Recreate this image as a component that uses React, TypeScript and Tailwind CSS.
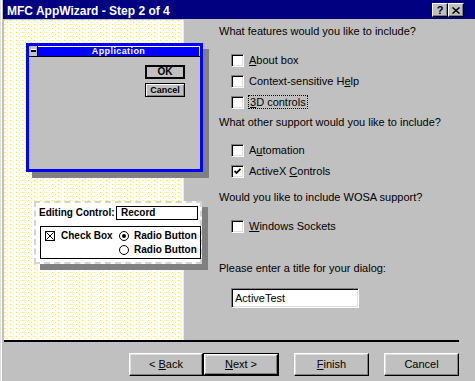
import React from 'react';

const font = "font-['Liberation_Sans',Arial,sans-serif]";

const Box: React.FC<{ checked?: boolean }> = ({ checked }) => (
  <span className="w-[13px] h-[13px] shrink-0 bg-white border border-t-[#808080] border-l-[#808080] border-r-white border-b-white shadow-[inset_1px_1px_0_#000,inset_-1px_-1px_0_#dfdfdf] flex items-center justify-center">
    {checked && (
      <svg width="9" height="9" viewBox="0 0 9 9">
        <polyline points="1.5,3.8 3.5,6 7.5,1.8" fill="none" stroke="#000" strokeWidth="1.8" />
      </svg>
    )}
  </span>
);

const Row: React.FC<{ checked?: boolean; children: React.ReactNode }> = ({ checked, children }) => (
  <div className="h-[21px] ml-[12px] flex items-center gap-[5px]">
    <Box checked={checked} />
    <span className="leading-[13px]">{children}</span>
  </div>
);

const Btn: React.FC<{ children: React.ReactNode; def?: boolean; className?: string }> = ({ children, def, className }) => {
  const inner = (
    <div className="w-full h-full bg-[#c0c0c0] border border-t-white border-l-white border-r-black border-b-black shadow-[inset_-1px_-1px_0_#808080,inset_1px_1px_0_#dfdfdf] flex items-center justify-center text-[11px] leading-[13px]">
      {children}
    </div>
  );
  if (def) return <div className={`h-[23px] border border-black ${className ?? ''}`}>{inner}</div>;
  return <div className={`h-[23px] ${className ?? ''}`}>{inner}</div>;
};

const Radio: React.FC<{ on?: boolean }> = ({ on }) => (
  <span className="w-[10px] h-[10px] rounded-full border border-black bg-white flex items-center justify-center shrink-0">
    {on && <span className="w-[4px] h-[4px] rounded-full bg-black" />}
  </span>
);

export default function App() {
  return (
    <div className={`w-[475px] h-[381px] bg-[#c0c0c0] flex flex-col overflow-hidden text-black ${font} shadow-[inset_1px_0_0_#dfdfdf,inset_2px_0_0_#fff]`}>
      {/* title bar */}
      <div className="h-[19px] ml-[3px] bg-[#000080] flex items-start pt-[5px] pl-[4px] pr-[11px]">
        <span className="text-white font-bold text-[12px] leading-[12px] whitespace-nowrap">MFC AppWizard - Step 2 of 4</span>
        <div className="ml-auto -mt-[2px] flex">
          <div className="w-[16px] h-[14px] bg-[#c0c0c0] border border-t-white border-l-white border-r-black border-b-black shadow-[inset_-1px_-1px_0_#808080] flex items-center justify-center text-[11px] font-bold leading-none">?</div>
          <div className="w-[16px] h-[14px] bg-[#c0c0c0] border border-t-white border-l-white border-r-black border-b-black shadow-[inset_-1px_-1px_0_#808080] flex items-center justify-center">
            <svg width="8" height="7" viewBox="0 0 8 7">
              <path d="M0.5 0.5 L7.5 6.5 M7.5 0.5 L0.5 6.5" stroke="#000" strokeWidth="1.5" />
            </svg>
          </div>
        </div>
      </div>

      <div className="ml-[4px] mt-[1px] flex flex-col">
        <div className="flex h-[320px]">
          {/* left picture panel */}
          <div className="relative w-[180px] h-full bg-white bg-[conic-gradient(from_270deg_at_1px_1px,#ffff00_25%,transparent_0),conic-gradient(from_270deg_at_1px_1px,#ffff00_25%,transparent_0)] bg-[length:6px_4px] bg-[position:0_0,3px_2px] border-r border-[#e8e8e8]">
            {/* mini app window */}
            <div className="absolute left-[22px] top-[23px] w-[177px] h-[129px] border-[3px] border-[#0000ff] bg-[#c0c0c0] shadow-[6px_6px_0_#808080] flex flex-col">
              <div className="h-[11px] flex border-b border-black">
                <div className="w-[9px] h-full bg-[#c0c0c0] border-r border-black flex items-center justify-center">
                  <span className="w-[5px] h-[2px] bg-black shadow-[0_-1px_0_#fff]" />
                </div>
                <div className="flex-1 bg-[#0000ff] border-t border-r border-white flex items-center justify-center">
                  <span className="text-white font-bold text-[9px] leading-[9px] tracking-[0.4px]">Application</span>
                </div>
              </div>
              <div className="flex flex-col items-end pt-[8px] pr-[15px] gap-[4px]">
                <div className="w-[40px] h-[14px] border-2 border-black bg-[#c0c0c0] flex items-center justify-center text-[10px] font-bold leading-none">OK</div>
                <div className="w-[40px] h-[14px] border border-black bg-[#c0c0c0] shadow-[inset_1px_1px_0_#fff,inset_-1px_-1px_0_#808080] flex items-center justify-center text-[9px] font-bold leading-none">Cancel</div>
              </div>
            </div>

            {/* editing control card */}
            <div className="absolute left-[30px] top-[181px] w-[168px] h-[63px] bg-white border-2 border-dashed border-[#d4d4d4] shadow-[6px_6px_0_#808080] flex flex-col px-[2px] pt-[3px] text-[10px] font-bold leading-[12px] whitespace-nowrap">
              <div className="flex items-center">
                <span className="ml-[1px]">Editing Control:</span>
                <div className="ml-auto w-[82px] h-[14px] border border-black flex items-center pl-[4px]">Record</div>
              </div>
              <div className="mt-[6px] ml-[2px] w-[161px] h-[33px] border-[1.5px] border-black flex pt-[3px] pl-[4px]">
                <div className="flex items-start gap-[6px] w-[74px] shrink-0 pt-[1px]">
                  <span className="w-[10px] h-[10px] border border-black flex items-center justify-center shrink-0">
                    <svg width="8" height="8" viewBox="0 0 8 8">
                      <path d="M0.5 0.5 L7.5 7.5 M7.5 0.5 L0.5 7.5" stroke="#000" strokeWidth="1" />
                    </svg>
                  </span>
                  <span className="-mt-[1px]">Check Box</span>
                </div>
                <div className="flex flex-col gap-[2px]">
                  <div className="flex items-center gap-[5px]"><Radio on /><span>Radio Button</span></div>
                  <div className="flex items-center gap-[5px]"><Radio /><span>Radio Button</span></div>
                </div>
              </div>
            </div>
          </div>

          {/* right options */}
          <div className="flex-1 pl-[35px] pt-[5px] text-[11px] leading-[13px] flex flex-col">
            <div>What features would you like to include?</div>
            <div className="mt-[12px]">
              <Row><span className="underline">A</span>bout box</Row>
              <Row>Context-sensitive H<span className="underline">e</span>lp</Row>
              <Row>
                <span className="outline outline-1 outline-dotted outline-black px-[1px]"><span className="underline">3</span>D controls</span>
              </Row>
            </div>
            <div className="mt-[3px]">What other support would you like to include?</div>
            <div className="mt-[11px]">
              <Row>A<span className="underline">u</span>tomation</Row>
              <Row checked>ActiveX <span className="underline">C</span>ontrols</Row>
            </div>
            <div className="mt-[9px]">Would you like to include WOSA support?</div>
            <div className="mt-[12px]">
              <Row><span className="underline">W</span>indows Sockets</Row>
            </div>
            <div className="mt-[25px]">Please enter a title for your dialog:</div>
            <div className="mt-[13px] ml-[12px] w-[128px] h-[20px] bg-white border border-t-[#808080] border-l-[#808080] border-r-white border-b-white shadow-[inset_1px_1px_0_#000,inset_-1px_-1px_0_#dfdfdf] flex items-center pl-[3px]">
              ActiveTest
            </div>
          </div>
        </div>

        <div className="w-[455px] h-[2px] bg-black" />

        <div className="mt-[11px] flex">
          <Btn className="ml-[125px] w-[74px]">&lt; <span className="underline ml-[3px]">B</span>ack</Btn>
          <Btn def className="w-[76px]"><span className="underline">N</span>ext &gt;</Btn>
          <Btn className="ml-[15px] w-[75px]"><span className="underline">F</span>inish</Btn>
          <Btn className="ml-[15px] w-[75px]">Cancel</Btn>
        </div>
      </div>
    </div>
  );
}
